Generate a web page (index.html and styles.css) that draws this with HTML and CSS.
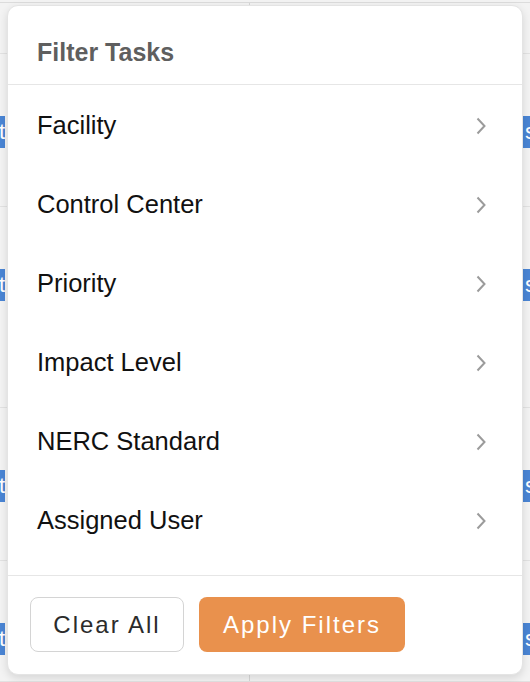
FILE: index.html
```html
<!DOCTYPE html>
<html lang="en">
<head>
    <meta charset="UTF-8">
    <meta name="viewport" content="width=device-width, initial-scale=1.0">
    <title>Filter Tasks</title>
    <link rel="stylesheet" href="styles.css">
</head>
<body>

<div class="board">
    <div class="board-row row-a">
        <div class="cell"></div>
        <div class="cell"></div>
    </div>
    <div class="board-row row-b">
        <div class="cell"><span class="tag tag-left">t</span></div>
        <div class="cell"><span class="tag tag-right">s</span></div>
    </div>
    <div class="board-row row-c">
        <div class="cell"><span class="tag tag-left">t</span></div>
        <div class="cell"><span class="tag tag-right">s</span></div>
    </div>
    <div class="board-row row-d">
        <div class="cell"><span class="tag tag-left">t</span></div>
        <div class="cell"><span class="tag tag-right">s</span></div>
    </div>
    <div class="board-row row-e">
        <div class="cell"><span class="tag tag-left">t</span></div>
        <div class="cell"><span class="tag tag-right">s</span></div>
    </div>
</div>

<div class="popover">
    <div class="popover-header">Filter Tasks</div>
    <ul class="filter-list">
        <li class="filter-item"><span>Facility</span><svg class="chevron" viewBox="0 0 10 18"><path d="M1.5 1.5 L8.5 9 L1.5 16.5"/></svg></li>
        <li class="filter-item"><span>Control Center</span><svg class="chevron" viewBox="0 0 10 18"><path d="M1.5 1.5 L8.5 9 L1.5 16.5"/></svg></li>
        <li class="filter-item"><span>Priority</span><svg class="chevron" viewBox="0 0 10 18"><path d="M1.5 1.5 L8.5 9 L1.5 16.5"/></svg></li>
        <li class="filter-item"><span>Impact Level</span><svg class="chevron" viewBox="0 0 10 18"><path d="M1.5 1.5 L8.5 9 L1.5 16.5"/></svg></li>
        <li class="filter-item"><span>NERC Standard</span><svg class="chevron" viewBox="0 0 10 18"><path d="M1.5 1.5 L8.5 9 L1.5 16.5"/></svg></li>
        <li class="filter-item"><span>Assigned User</span><svg class="chevron" viewBox="0 0 10 18"><path d="M1.5 1.5 L8.5 9 L1.5 16.5"/></svg></li>
    </ul>
    <div class="popover-footer">
        <button class="btn btn-clear">Clear All</button>
        <button class="btn btn-apply">Apply Filters</button>
    </div>
</div>

</body>
</html>
```

FILE: styles.css
```css
body {
    margin: 0;
    height: 682px;
    overflow: hidden;
    background-color: #f3f3f3;
    font-family: "Liberation Sans", Arial, sans-serif;
}
.board {
    margin-top: 2px;
    border-top: 1px solid #dcdcdc;
}
.board-row {
    display: grid;
    grid-template-columns: 250px 1fr;
    border-bottom: 1px solid #e2e2e2;
}
.row-a { height: 50px; }
.row-b { height: 152px; }
.row-c { height: 200px; }
.row-d { height: 152px; }
.row-e { height: 120px; }
.cell {
    position: relative;
    border-right: 1px solid #d6d6d6;
}
.cell:last-child {
    border-right: none;
}
.tag {
    position: absolute;
    top: 62px;
    height: 32px;
    line-height: 32px;
    background-color: #4a85d4;
    color: white;
    font-size: 22px;
}
.row-b .tag { top: 62px; }
.tag-left {
    right: 244px;
    padding: 0 0 0 20px;
}
.tag-right {
    left: 273px;
    padding: 0 20px 0 2px;
}

.popover {
    position: absolute;
    top: 5px;
    left: 7px;
    width: 514px;
    height: 668px;
    background: white;
    border: 1px solid #e4e4e4;
    border-radius: 11px;
    box-shadow: 0 3px 8px rgba(0, 0, 0, 0.12);
    display: flex;
    flex-direction: column;
}
.popover-header {
    height: 64px;
    padding: 14px 0 0 29px;
    display: flex;
    align-items: center;
    font-size: 25px;
    font-weight: bold;
    color: #5f5f5f;
    border-bottom: 1px solid #e6e6e6;
}
.filter-list {
    list-style: none;
    margin: 0;
    padding: 1px 0 15px;
    border-bottom: 1px solid #e6e6e6;
}
.filter-item {
    height: 79px;
    display: flex;
    align-items: center;
    justify-content: space-between;
    padding: 0 36px 0 29px;
    font-size: 25.5px;
    color: #111;
}
.chevron {
    width: 10px;
    height: 18px;
    fill: none;
    stroke: #9b9b9b;
    stroke-width: 2;
}
.popover-footer {
    display: flex;
    gap: 15px;
    padding: 21px 22px 0;
}
.btn {
    height: 55px;
    border-radius: 8px;
    font-family: "Liberation Sans", Arial, sans-serif;
    font-size: 24px;
    letter-spacing: 2px;
    cursor: pointer;
}
.btn-clear {
    width: 154px;
    background: white;
    border: 1px solid #d4d4d4;
    color: #2b2b2b;
}
.btn-apply {
    width: 206px;
    background-color: #e9914d;
    border: none;
    color: white;
}
```
